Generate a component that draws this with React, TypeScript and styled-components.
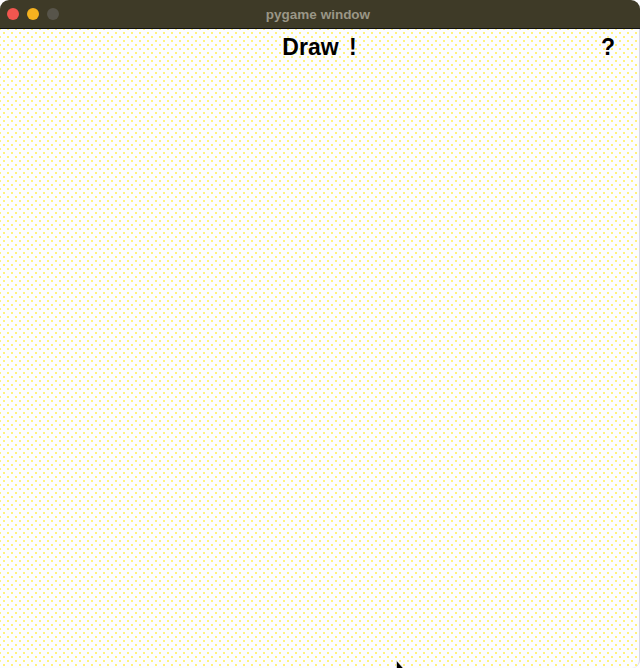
import React from "react";
import styled, { createGlobalStyle } from "styled-components";

const Global = createGlobalStyle`
  html, body { margin: 0; padding: 0; overflow: hidden; background: #fdfdff; }
  * { box-sizing: border-box; }
`;

const Window = styled.div`
  position: relative;
  width: 640px;
  height: 668px;
  display: flex;
  flex-direction: column;
  font-family: "Liberation Sans", Arial, sans-serif;
`;

const TitleBar = styled.div`
  height: 29px;
  flex: none;
  display: grid;
  grid-template-columns: 1fr auto 1fr;
  align-items: center;
  background: #3e3a27;
  border-bottom: 1px solid #111;
  border-radius: 9px 9px 0 0;
  padding: 0 7px;
`;

const Lights = styled.div`
  display: flex;
  gap: 8px;
`;

const Light = styled.span<{ $c: string }>`
  width: 12px;
  height: 12px;
  border-radius: 50%;
  background: ${(p) => p.$c};
`;

const Title = styled.div`
  color: #9a9686;
  font-weight: bold;
  font-size: 13.5px;
  margin-right: 4px;
`;

const Canvas = styled.div`
  flex: 1;
  background-color: #fdfdff;
  background-image: radial-gradient(circle, #fff27a 0.7px, transparent 1px),
    radial-gradient(circle, #fff27a 0.7px, transparent 1px);
  background-size: 8px 8px;
  background-position: 0 0, 4px 4px;
  border-right: 1px solid #d8d8e4;
  border-radius: 0 0 8px 8px;
`;

const Header = styled.div`
  display: grid;
  grid-template-columns: 1fr auto 1fr;
  align-items: center;
  padding: 5px 24px 0;
  font-size: 23px;
  font-weight: bold;
  color: #000;
`;

const Heading = styled.div`
  grid-column: 2;
  word-spacing: 4px;
`;

const Help = styled.div`
  justify-self: end;
  font-size: 23px;
`;

const Cursor = styled.svg`
  position: absolute;
  left: 396px;
  top: 660px;
`;

export default function App() {
  return (
    <>
      <Global />
      <Window>
        <TitleBar>
          <Lights>
            <Light $c="#f2564f" />
            <Light $c="#f5b21f" />
            <Light $c="#57544a" />
          </Lights>
          <Title>pygame window</Title>
          <div />
        </TitleBar>
        <Canvas>
          <Header>
            <Heading>Draw !</Heading>
            <Help>?</Help>
          </Header>
        </Canvas>
        <Cursor width="12" height="10" viewBox="0 0 12 10">
          <path d="M0.5 0.5 L0.5 9 L8 9 Z" fill="#000" stroke="#fff" strokeWidth="0.6" />
        </Cursor>
      </Window>
    </>
  );
}
